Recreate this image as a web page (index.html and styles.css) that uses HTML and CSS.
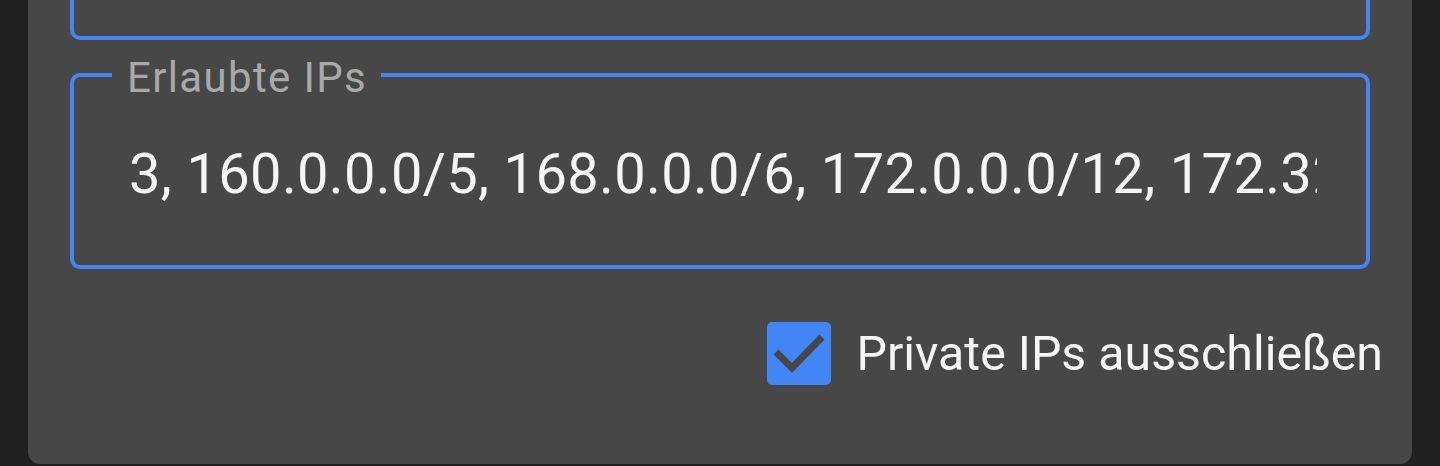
FILE: index.html
```html
<!DOCTYPE html>
<html lang="de">
  <head>
    <meta charset="UTF-8" />
    <meta name="viewport" content="width=device-width, initial-scale=1.0" />
    <title>Erlaubte IPs</title>
    <link rel="stylesheet" href="styles.css">
  </head>
  <body>
    <div class="panel">
      <fieldset class="field field-top"></fieldset>

      <fieldset class="field field-ips">
        <legend>Erlaubte IPs</legend>
        <div class="field-input">
          <span class="field-value">3, 160.0.0.0/5, 168.0.0.0/6, 172.0.0.0/12, 172.32.0.0/11, 172.64.0.0/10</span>
        </div>
      </fieldset>

      <label class="check-row">
        <span class="check-box">
          <svg width="64" height="63" viewBox="0 0 64 63">
            <polyline points="9,30 25,46 55,15" fill="none" stroke="#474747" stroke-width="7" />
          </svg>
        </span>
        <span class="check-label">Private IPs ausschließen</span>
      </label>
    </div>
  </body>
</html>
```

FILE: styles.css
```css
body {
  margin: 0;
  background-color: #202020;
  font-family: Roboto, "Noto Sans", sans-serif;
  overflow: hidden;
}
.panel {
  margin: 0 28px;
  padding: 0 42px 79px;
  background-color: #474747;
  border-radius: 0 0 12px 12px;
}
.field {
  margin: 0;
  padding: 0;
  border: 4px solid #4285f4;
  border-radius: 10px;
  box-sizing: border-box;
}
.field-top {
  margin-top: -60px;
  height: 100px;
}
.field-ips {
  margin-top: 8px;
  min-width: 0;
}
.field-ips legend {
  margin-left: 38px;
  padding: 6px 14px 0 15px;
  font-size: 42px;
  line-height: 48px;
  letter-spacing: 1.35px;
  color: #a9a9a9;
}
.field-input {
  padding: 39px 49px 58px 55px;
}
.field-value {
  display: block;
  overflow: hidden;
  white-space: nowrap;
  font-size: 56px;
  line-height: 66px;
  letter-spacing: 0.35px;
  color: #f5f5f5;
}
.check-row {
  display: flex;
  justify-content: flex-end;
  align-items: center;
  gap: 25px;
  margin-top: 53px;
  margin-right: -13px;
}
.check-box {
  display: block;
  width: 64px;
  height: 63px;
  border-radius: 5px;
  background-color: #4285f4;
}
.check-box svg {
  display: block;
}
.check-label {
  font-size: 48.3px;
  color: #f5f5f5;
}
```
